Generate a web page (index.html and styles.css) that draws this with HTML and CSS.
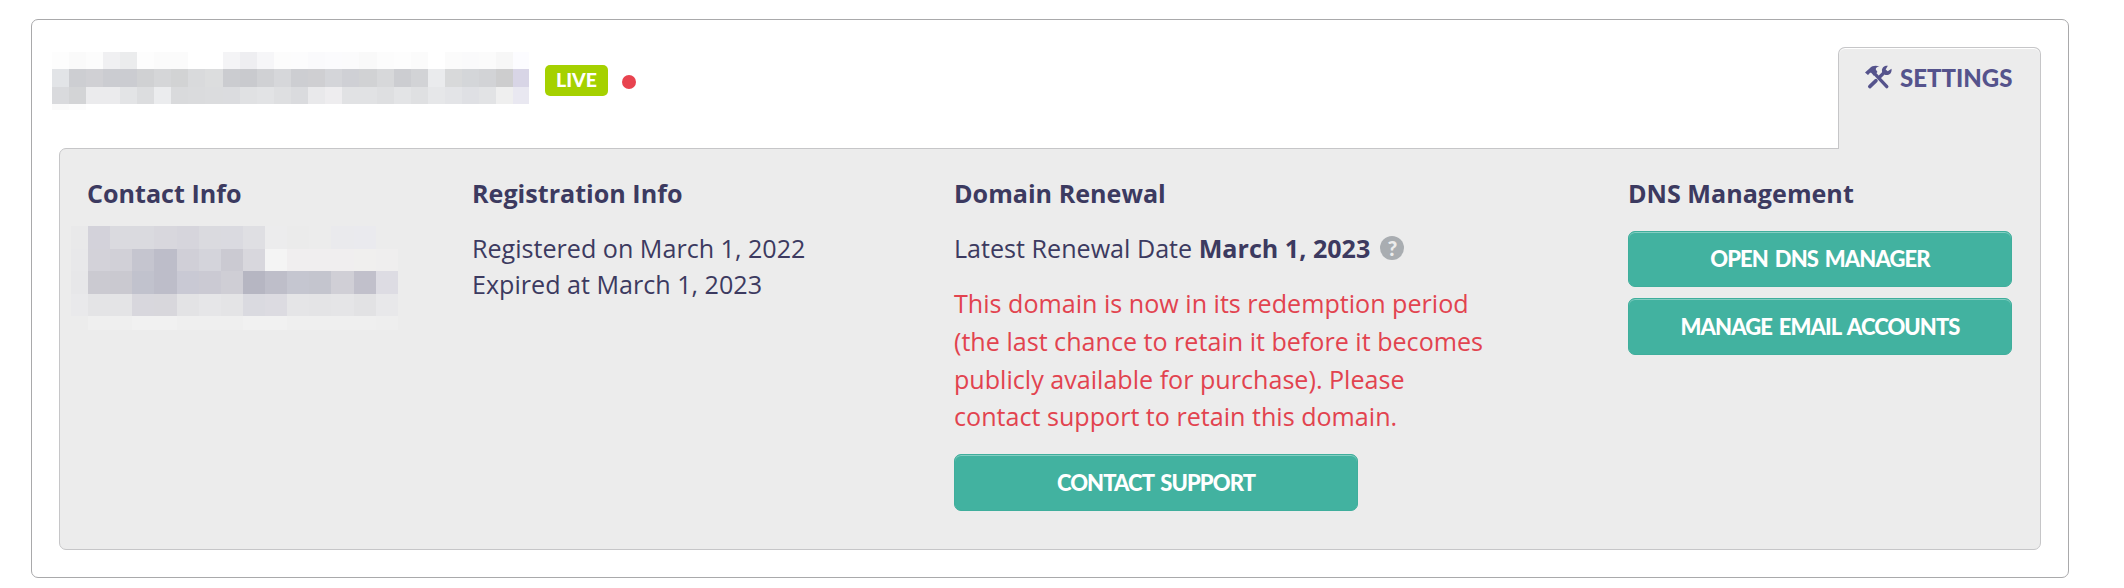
FILE: index.html
```html
<!DOCTYPE html>
<html lang="en">
<head>
  <meta charset="UTF-8" />
  <meta name="viewport" content="width=device-width, initial-scale=1.0"/>
  <title>Domain Settings</title>
  <link rel="stylesheet" href="styles.css">
</head>
<body>

  <div class="domain-card">
    <header class="domain-header">
      <div class="domain-title">
        <div class="mosaic mosaic-name" id="domainName"></div>
        <span class="badge">LIVE</span>
        <span class="status-dot"></span>
      </div>
      <a class="settings-tab">
        <svg class="tools-icon" viewBox="0 0 26 24">
          <g fill="none" stroke="currentColor" stroke-linecap="round">
            <path d="M9.5 8.5L21 20.8" stroke-width="3.2"/>
            <path d="M4.6 20.8L10.6 15" stroke-width="3.4"/>
            <path d="M14.6 11L18.5 7.2" stroke-width="3.2"/>
          </g>
          <path fill="currentColor" d="M0 7.2L4.6 3C7 .6 10.500 .2 14 1.500C11.500 1.700 10.300 2.700 10.400 4.300L12 6.800L8.500 10.200L6.200 7.600C5 7.300 4.300 7.800 4 8.700L2.800 9.700Z"/>
          <path fill="currentColor" d="M22 .8L19.900 4.200L21.900 6L25.500 3.500C26.200 7.500 23.500 10.300 19.600 9.600L16.500 6.800C15.500 3.300 18.200 .4 22 .8Z"/>
        </svg>
        <span>SETTINGS</span>
      </a>
    </header>

    <div class="panel">
      <section>
        <h3>Contact Info</h3>
        <div class="mosaic mosaic-contact" id="contactInfo"></div>
      </section>

      <section>
        <h3>Registration Info</h3>
        <p>Registered on March 1, 2022</p>
        <p>Expired at March 1, 2023</p>
      </section>

      <section>
        <h3>Domain Renewal</h3>
        <p class="renewal-date">
          <span>Latest Renewal Date <strong>March 1, 2023</strong></span>
          <span class="help">?</span>
        </p>
        <p class="warning">This domain is now in its redemption period<br>(the last chance to retain it before it becomes<br>publicly available for purchase). Please<br>contact support to retain this domain.</p>
        <button class="btn btn-support">CONTACT SUPPORT</button>
      </section>

      <section class="dns">
        <h3>DNS Management</h3>
        <button class="btn">OPEN DNS MANAGER</button>
        <button class="btn">MANAGE EMAIL ACCOUNTS</button>
      </section>
    </div>
  </div>

  <script src="script.js"></script>
</body>
</html>
```
FILE: styles.css
```css
* {
  box-sizing: border-box;
  margin: 0;
  padding: 0;
}

body {
  background-color: #fff;
  color: #3c3a60;
  font-family: "Open Sans", sans-serif;
  font-size: 25.12px;
  line-height: 36px;
  padding: 19px 55px 10px 31px;
}

.domain-card {
  height: 559px;
  border: 1px solid #a9a9ab;
  border-radius: 7px;
  padding: 27px;
}

.domain-header {
  display: flex;
  justify-content: space-between;
  height: 102px;
}

.domain-title {
  display: flex;
  align-items: flex-start;
  margin-left: -7.5px;
}

.mosaic {
  display: grid;
}

.mosaic-name {
  grid-template-columns: repeat(27, 17.12px) 15.5px;
  grid-template-rows: 17px 18px 17px 6px;
  margin-top: 5px;
}

.badge {
  width: 63px;
  height: 31px;
  margin: 18px 0 0 16px;
  border-radius: 5px;
  background-color: #a5d100;
  color: #fff;
  font-family: Lato, sans-serif;
  font-size: 19.5px;
  font-weight: 900;
  line-height: 29px;
  text-align: center;
}

.status-dot {
  width: 14px;
  height: 14px;
  margin: 28px 0 0 14px;
  border-radius: 50%;
  background-color: #e8434f;
}

/* the tab overlaps the panel's top border */
.settings-tab {
  position: relative;
  z-index: 1;
  display: flex;
  gap: 8px;
  width: 203px;
  height: 102px;
  padding: 16px 0 0 26px;
  border: 1px solid #c6c6c8;
  border-bottom: none;
  border-radius: 7px 7px 0 0;
  background-color: #ececec;
  box-shadow: inset 0 1px 0 #fff;
  color: #55538c;
  font-family: Lato, sans-serif;
  font-size: 24px;
  font-weight: 900;
  line-height: 28px;
}

.tools-icon {
  width: 27px;
  height: 25px;
  margin-top: 1px;
}

.panel {
  display: grid;
  grid-template-columns: 385px 482px 674px 384px;
  height: 402px;
  margin-top: -1px;
  padding: 26px 28px 26px 27px;
  border: 1px solid #c6c6c8;
  border-radius: 7px 0 7px 7px;
  background-color: #ececec;
}

h3 {
  font-size: 25.12px;
  line-height: 36px;
  margin-bottom: 19px;
}

.mosaic-contact {
  grid-template-columns: 17px repeat(14, 22.13px);
  grid-template-rows: 23px 22px 23px 22px 14px;
  margin: -4px 0 0 -16px;
}

.renewal-date {
  display: flex;
  align-items: center;
  gap: 10px;
}

.help {
  width: 24px;
  height: 24px;
  border-radius: 50%;
  background-color: #a9adb1;
  color: #ececec;
  font-family: Lato, sans-serif;
  font-size: 21px;
  font-weight: 900;
  line-height: 24px;
  text-align: center;
}

.warning {
  margin-top: 19px;
  color: #e2434f;
  line-height: 37.8px;
}

.btn {
  display: block;
  width: 100%;
  height: 57px;
  padding-bottom: 1px;
  border: 1px solid #3fae9c;
  border-radius: 7px;
  background-color: #42b2a0;
  box-shadow: inset 0 1px 0 #84cec2;
  color: #fff;
  font-family: Lato, sans-serif;
  font-size: 22px;
  font-weight: 900;
  letter-spacing: -0.9px;
  word-spacing: 2.5px;
  cursor: pointer;
}

.btn-support {
  width: 404px;
  margin-top: 18px;
}

.dns h3 {
  margin-bottom: 20px;
}

.dns .btn:first-of-type {
  height: 56px;
}

.dns .btn + .btn {
  margin-top: 11px;
}
```
FILE: script.js
```js
// pixelated placeholders for private details, one hex colour per cell
const domainName = [
  "fdfdfd fafafa fcfcfc f0f0f2 ebeced fdfdfd fbfbfb fbfbfb ffffff ffffff f4f4f6 eeeef1 f6f6f8 fcfcfc fcfcfd fafafc fbfbfd fbfbfc f9f9f9 fcfcfc fdfdfd fbfbfb ffffff fbfbfb fafafb fbfbfb f7f7f7 fcfcff",
  "e2e4e7 cdced2 d0d0d4 cbccd1 cbccd1 d0d1d3 d5d6d8 d2d3d4 d9dadc dcddde cbccd0 c9cace d0d1d4 d6d7da cdced2 cfcfd2 d4d5d9 cfd0d5 d1d2d4 d7d8da cccdd1 d2d3d6 eaebed d8d9da d4d6d9 d2d3d6 cdcdce d8d5e6",
  "d9dadd d3d4d6 ebebed ebebed e3e4e6 dcdddf ebecee d9dadc dadbdd dbdcde dbdcdf e0e1e3 e2e3e5 dedfe1 dadbde e9e9eb eeedef e1e2e4 e1e2e4 dedfe1 e3e4e6 dfe0e2 e6e7e9 e3e4e7 dfe0e4 e2e3e5 efefef e9e8f1",
  "fafafa fcfcfc"
];

const contactInfo = [
  "e9e9ea d3d2da dadadf dadadf d8d7dd d6d5dc dadadf dadae0 dfdfe3 ececed ebebeb ececec eaeaed eaeaee ececec",
  "e8e8ea d3d2d9 d1d0d7 c5c5cf bdbdc9 d0cfd7 d4d4db cbcad2 d8d7dd f4f4f4 f0eeef f0eeef f0eeef f0efee efeeee",
  "e7e7e9 cbcad1 cac9d0 c1c2cd bdbdc9 c9c9d4 cbcad3 cfced5 b6b6c2 bebec9 c5c6d0 c4c5ce d0cfd6 c1c0cb dddce3",
  "e9e9eb e4e4e6 e4e4e6 d8d7dd d8d7dc e3e3e5 e6e6e8 e4e4e6 dadae0 dcdbe1 e5e5e7 e4e4e6 e5e5e7 e2e2e4 e8e8ea",
  "ececec efefef efefef f1f1f1 f1f1f1 efefef efefef efefef f1f1f1 f1f1f1 efefef efefef efefef efefef eeeeee"
];

function drawMosaic(id, rows) {
  const box = document.getElementById(id);
  rows.join(" ").split(" ").forEach(color => {
    const cell = document.createElement("i");
    cell.style.backgroundColor = "#" + color;
    box.appendChild(cell);
  });
}

drawMosaic("domainName", domainName);
drawMosaic("contactInfo", contactInfo);
```
